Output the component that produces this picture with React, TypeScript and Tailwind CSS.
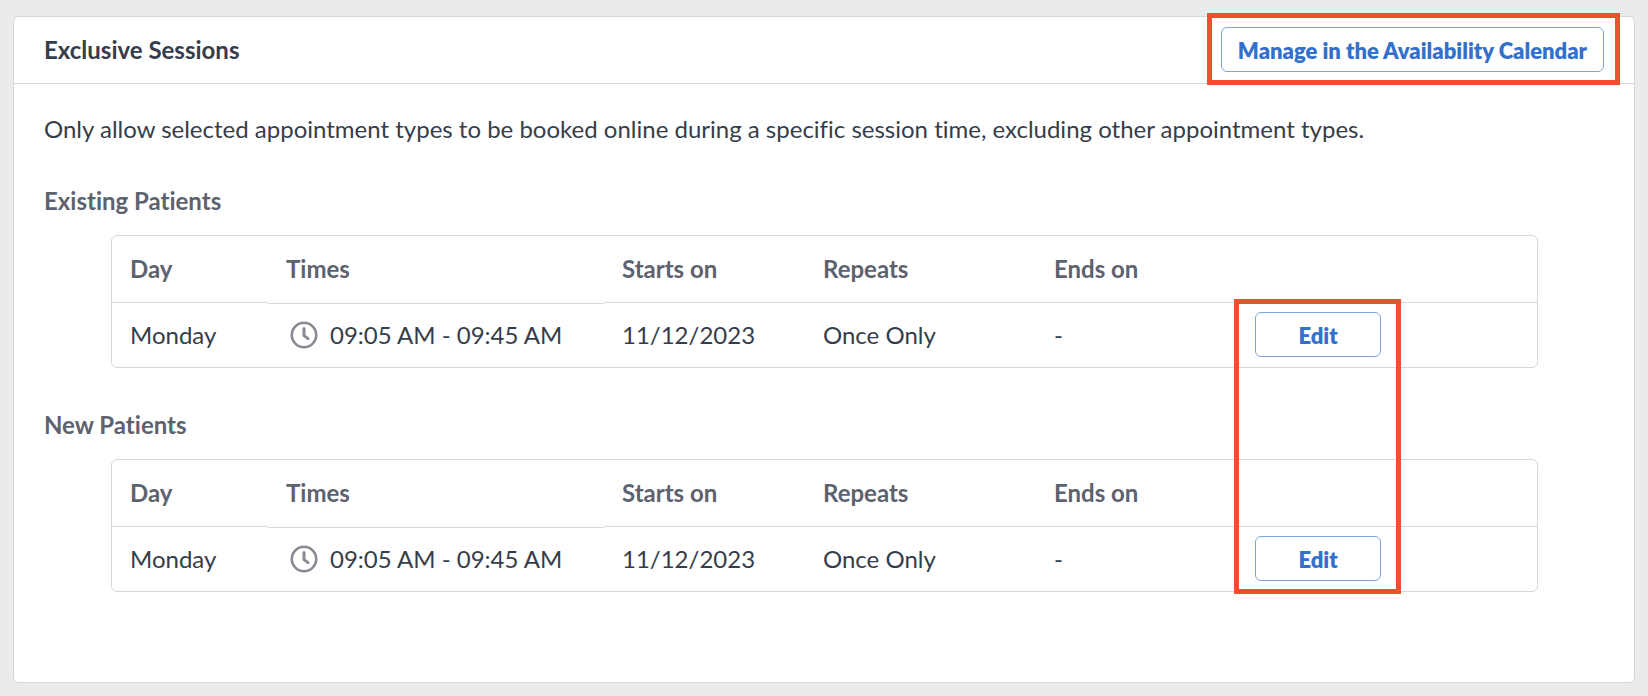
import React from 'react';

interface Session {
  day: string;
  times: string;
  startsOn: string;
  repeats: string;
  endsOn: string;
}

interface SessionGroup {
  title: string;
  sessions: Session[];
}

const groups: SessionGroup[] = [
  {
    title: 'Existing Patients',
    sessions: [
      { day: 'Monday', times: '09:05 AM - 09:45 AM', startsOn: '11/12/2023', repeats: 'Once Only', endsOn: '-' }
    ]
  },
  {
    title: 'New Patients',
    sessions: [
      { day: 'Monday', times: '09:05 AM - 09:45 AM', startsOn: '11/12/2023', repeats: 'Once Only', endsOn: '-' }
    ]
  }
];

const ClockIcon: React.FC = () => (
  <svg viewBox="0 0 28 28" className="w-7 h-7 shrink-0" fill="none" stroke="#868a93" aria-hidden="true">
    <circle cx="14" cy="14" r="12.2" strokeWidth="2.6" />
    <path d="M14 7.6v7l4 3" strokeWidth="3" strokeLinecap="round" />
  </svg>
);

const OutlineButton: React.FC<{ className?: string; children: React.ReactNode }> = ({ className = '', children }) => (
  <button
    type="button"
    className={`h-[45px] pt-0.5 rounded-md border border-[#7ba4de] bg-white text-[22px] leading-7 font-extrabold text-[#3370cc] whitespace-nowrap ${className}`}
  >
    {children}
  </button>
);

const SessionTable: React.FC<{ group: SessionGroup; highlight: boolean }> = ({ group, highlight }) => (
  <section>
    <h3 className="font-bold text-[#5d626f]">{group.title}</h3>
    <div className="mt-[18px] ml-[67px] mr-[66px] rounded-md border border-[#d5d7d9]">
      <table className="w-full table-fixed border-separate border-spacing-0 text-left">
        <colgroup>
          <col className="w-[156px]" />
          <col className="w-[336px]" />
          <col className="w-[201px]" />
          <col className="w-[231px]" />
          <col className="w-[201px]" />
          <col />
        </colgroup>
        <thead className="text-[#5d626f]">
          <tr className="h-[67px]">
            <th className="px-[18px] border-b border-[#d5d7d9] font-bold">Day</th>
            <th className="px-[18px] pb-px font-bold">Times</th>
            <th className="px-[18px] border-b border-[#d5d7d9] font-bold">Starts on</th>
            <th className="px-[18px] border-b border-[#d5d7d9] font-bold">Repeats</th>
            <th className="px-[18px] border-b border-[#d5d7d9] font-bold">Ends on</th>
            <th className="px-[18px] border-b border-[#d5d7d9]" aria-label="Actions" />
          </tr>
        </thead>
        <tbody>
          {group.sessions.map((s, i) => (
            <tr key={i} className="h-16">
              <td className="px-[18px]">{s.day}</td>
              <td className="px-[18px] pb-px border-t border-[#d5d7d9]">
                <div className="flex items-center gap-3 pl-1">
                  <ClockIcon />
                  <span>{s.times}</span>
                </div>
              </td>
              <td className="px-[18px]">{s.startsOn}</td>
              <td className="px-[18px]">{s.repeats}</td>
              <td className="px-[18px]">{s.endsOn}</td>
              <td className="px-[18px] pt-[9px] pb-2.5">
                <div className="relative flex w-[126px]">
                  <OutlineButton className="w-full">Edit</OutlineButton>
                  {/* Callout runs down over the edit buttons of both tables */}
                  {highlight && (
                    <div className="absolute -top-[13px] -left-[21px] -right-5 h-[295px] z-10 border-5 border-[#eb512d] pointer-events-none" />
                  )}
                </div>
              </td>
            </tr>
          ))}
        </tbody>
      </table>
    </div>
  </section>
);

const App: React.FC = () => {
  return (
    <div className="min-h-screen flex flex-col bg-[#e9ebec] px-[13px] pt-4 pb-[13px] font-['Lato',sans-serif] [font-variant-ligatures:none] text-2xl leading-8 text-[#363d4a]">
      <main className="flex-1 rounded-md border border-[#d5d7d9] bg-white">
        <header className="flex items-center justify-between pt-2.5 pb-[11px] px-[30px] border-b border-[#d5d7d9]">
          <h2 className="font-bold">Exclusive Sessions</h2>
          <div className="relative flex">
            <OutlineButton className="px-4">Manage in the Availability Calendar</OutlineButton>
            <div className="absolute -top-[14px] -bottom-[13px] -left-[14px] -right-4 border-5 border-[#eb512d] pointer-events-none" />
          </div>
        </header>

        <div className="px-[30px] pt-[29px] pb-[90px]">
          <p>
            Only allow selected appointment types to be booked online during a specific session time, excluding other
            appointment types.
          </p>
          <div className="mt-10 flex flex-col gap-[41px]">
            {groups.map((group, i) => (
              <SessionTable key={group.title} group={group} highlight={i === 0} />
            ))}
          </div>
        </div>
      </main>
    </div>
  );
};

export default App;
